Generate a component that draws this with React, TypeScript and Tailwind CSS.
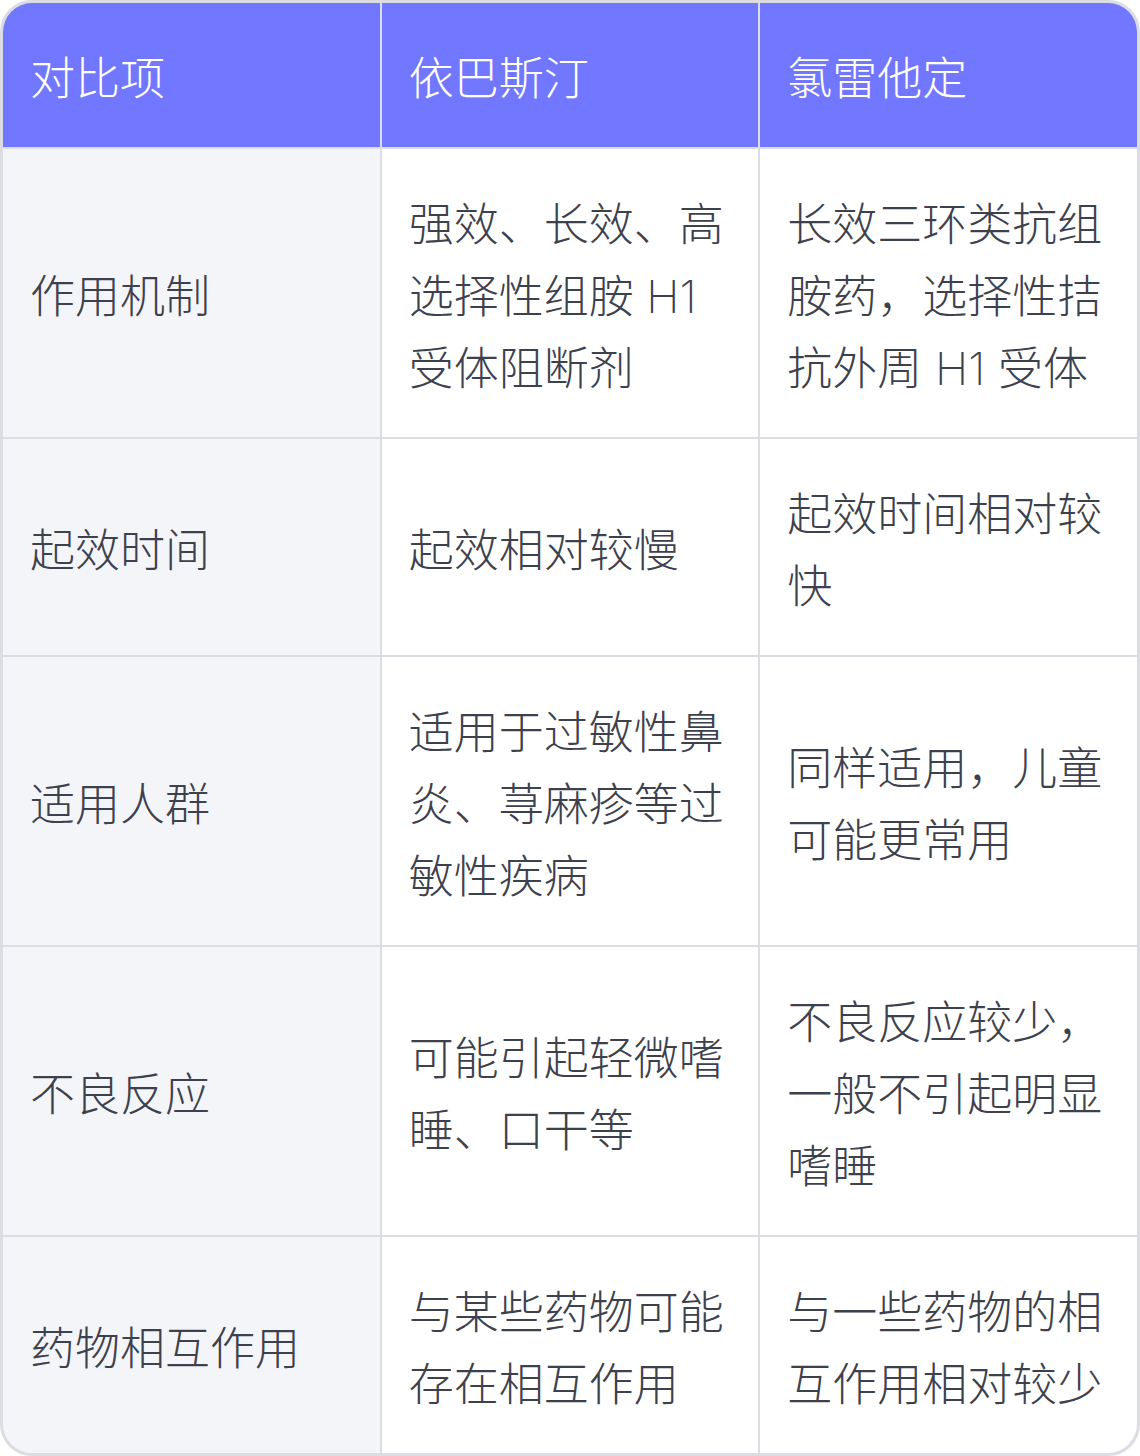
const rows: [string, string, string][] = [
  ["作用机制", "强效、长效、高选择性组胺 H1 受体阻断剂", "长效三环类抗组胺药，选择性拮抗外周 H1 受体"],
  ["起效时间", "起效相对较慢", "起效时间相对较快"],
  ["适用人群", "适用于过敏性鼻炎、荨麻疹等过敏性疾病", "同样适用，儿童可能更常用"],
  ["不良反应", "可能引起轻微嗜睡、口干等", "不良反应较少，一般不引起明显嗜睡"],
  ["药物相互作用", "与某些药物可能存在相互作用", "与一些药物的相互作用相对较少"],
];

const headers = ["对比项", "依巴斯汀", "氯雷他定"];

const cell = "px-[27px] pt-[40px] pb-[32px] text-[45px] font-extralight leading-[72px]";

export default function App() {
  return (
    <div
      className="w-[1140px] bg-white"
      style={{ fontFamily: 'Inter, "Noto Sans CJK SC", sans-serif' }}
    >
      <div className="overflow-hidden rounded-[32px] border-[3px] border-[#dcdde2] bg-[#dcdde2]">
        <div className="grid grid-cols-3 gap-[2px]">
          {headers.map((h) => (
            <div key={h} className={`bg-[#7177ff] text-white ${cell}`}>
              {h}
            </div>
          ))}
          {rows.map(([a, b, c]) => (
            <div key={a} className="contents">
              <div className={`flex items-center bg-[#f4f5f9] text-[#3d414d] ${cell}`}>
                {a}
              </div>
              <div className={`flex items-center bg-white text-[#3d414d] ${cell}`}>
                <p>{b}</p>
              </div>
              <div className={`flex items-center bg-white text-[#3d414d] ${cell}`}>
                <p>{c}</p>
              </div>
            </div>
          ))}
        </div>
      </div>
    </div>
  );
}
